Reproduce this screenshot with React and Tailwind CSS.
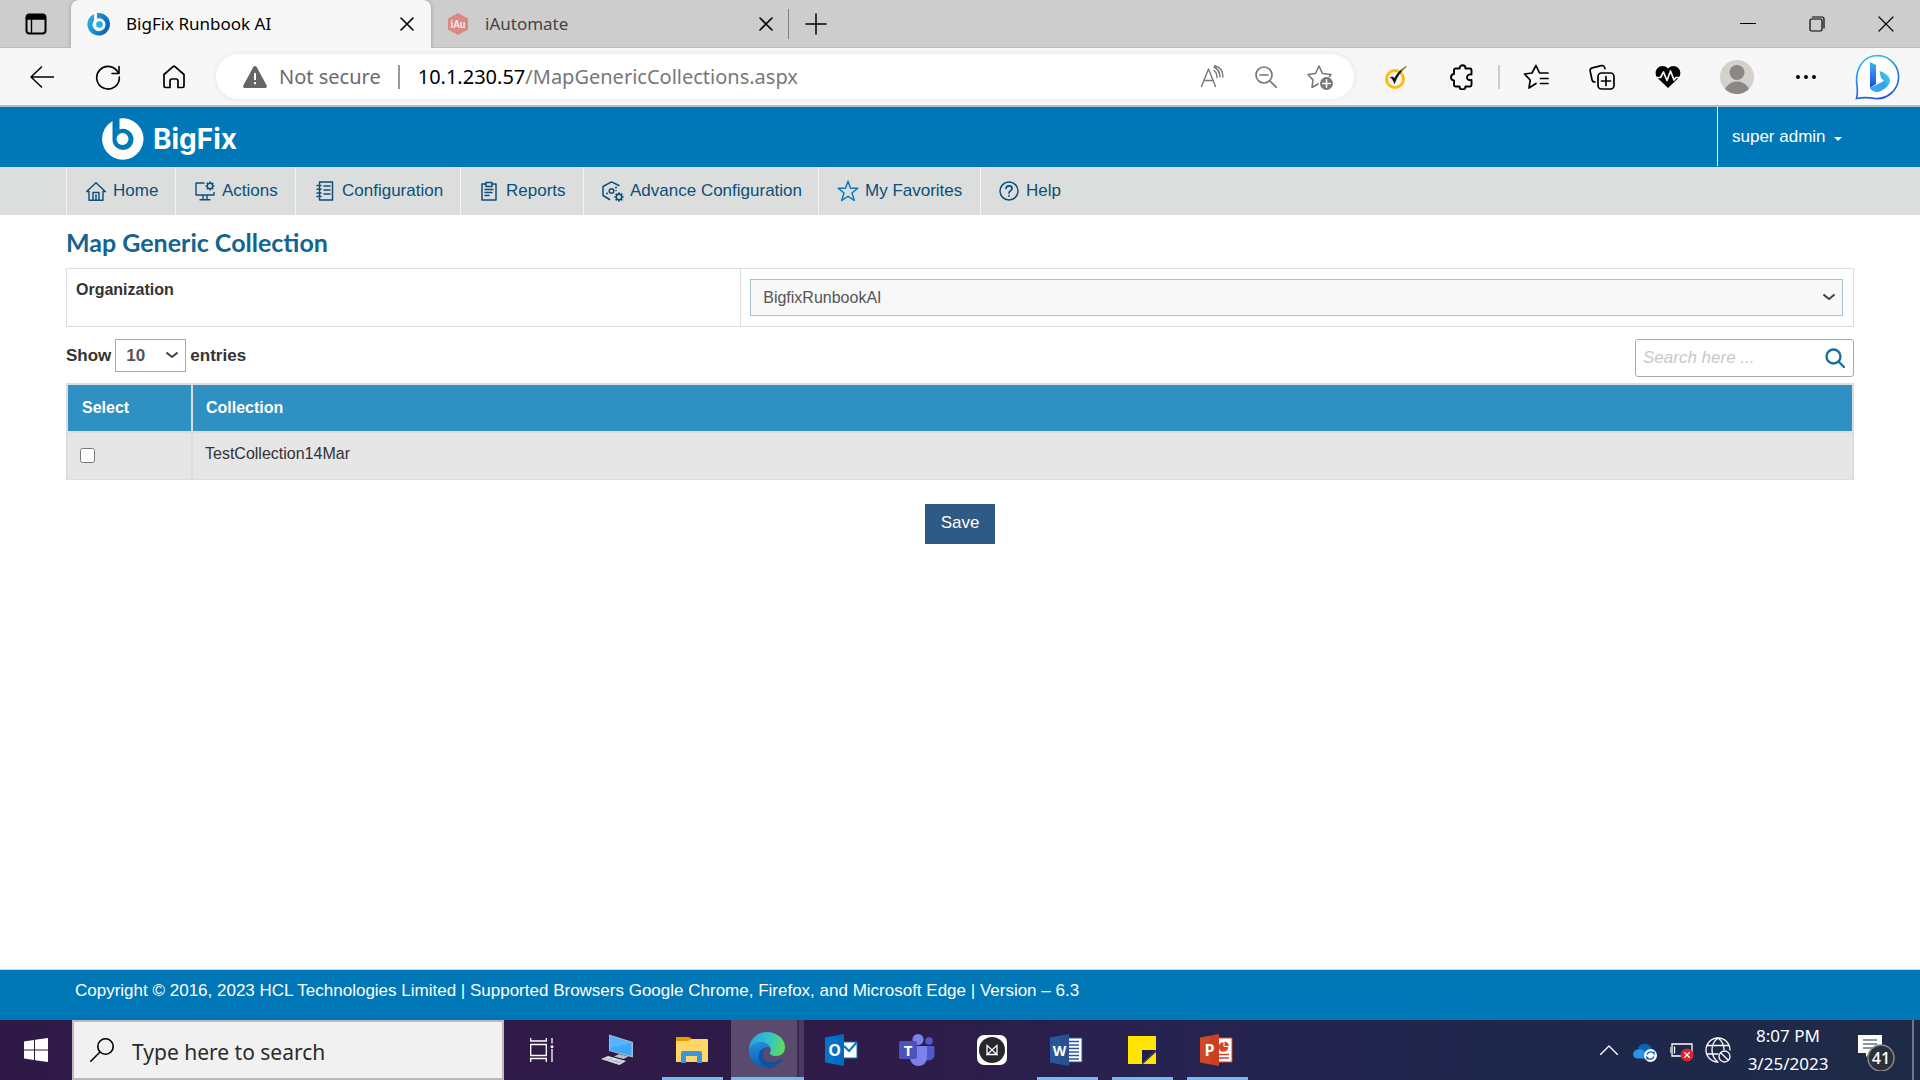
import React from "react";

const stroke = { fill: "none", stroke: "currentColor", strokeLinecap: "round", strokeLinejoin: "round" };

function Svg({ w = 24, h = 24, vb, sw = 1.5, children, className = "" }) {
  return (
    <svg width={w} height={h} viewBox={vb || `0 0 ${w} ${h}`} {...stroke} strokeWidth={sw} className={`shrink-0 ${className}`} aria-hidden="true">
      {children}
    </svg>
  );
}

const gearTeeth = (cx, cy, r1, r2) =>
  [0, 45, 90, 135, 180, 225, 270, 315]
    .map((a) => {
      const t = (a * Math.PI) / 180;
      return `M${cx + r1 * Math.cos(t)} ${cy + r1 * Math.sin(t)}L${cx + r2 * Math.cos(t)} ${cy + r2 * Math.sin(t)}`;
    })
    .join("");

const Close = () => (
  <Svg w={14} h={14} sw={1.6}>
    <path d="M1 1l12 12M13 1L1 13" />
  </Svg>
);

const Chevron = ({ className }) => (
  <Svg w={12} h={8} sw={2} className={`text-[#444] ${className}`}>
    <path d="M.5 1.500l5.500 4.500 5.500-4.500" strokeLinecap="butt" />
  </Svg>
);

/* ---------- Browser ---------- */

function TabStrip() {
  return (
    <div className="flex h-12 bg-[#cdcdcd] text-black">
      <button aria-label="Tab actions" className="flex w-[71px] shrink-0 items-center justify-center border-b border-[#bdbdbd]">
        <Svg w={22} h={22} sw={2}>
          <rect x="1.5" y="1.5" width="19" height="19" rx="3" />
          <path d="M1.5 3.5a2 2 0 0 1 2-2h15a2 2 0 0 1 2 2v2.700h-19z" fill="currentColor" strokeWidth="1" />
          <path d="M6.500 6v14" strokeWidth="1.400" />
        </Svg>
      </button>
      <div className="flex w-[360px] items-center rounded-t-lg bg-[#f7f7f7] pr-[17px] pl-4 shadow-[0_0_4px_rgba(0,0,0,0.25)] [clip-path:inset(0_-4px_0_-4px)]">
        <svg width="24" height="24" viewBox="0 0 24 24" className="shrink-0" aria-hidden="true">
          <defs>
            <linearGradient id="fav" x1="0" y1="0" x2="1" y2="0.4">
              <stop offset="0" stopColor="#2cb8ea" />
              <stop offset="1" stopColor="#0a68b4" />
            </linearGradient>
          </defs>
          <path fillRule="evenodd" fill="url(#fav)" d="M10 1h2a11.300 11.300 0 1 1-8.500 3.500L7 2v6.500a6.500 6.500 0 1 0 3-2z" />
          <circle cx="12.500" cy="12.500" r="3.300" fill="#22aee4" />
        </svg>
        <span className="ml-[15px] flex-1 font-['Noto_Sans'] text-[17px]">BigFix Runbook AI</span>
        <button aria-label="Close tab"><Close /></button>
      </div>
      <div className="flex w-[357px] items-center border-b border-[#bdbdbd] pr-[15px] pl-4">
        <svg width="22" height="24" viewBox="0 0 22 24" className="shrink-0" aria-hidden="true">
          <path d="M11 1l10 5.600v11L11 23 1 17.600v-11z" fill="#d98884" />
          <text x="11" y="16" textAnchor="middle" fontSize="10" fontWeight="700" fontFamily="Roboto, sans-serif" fill="#f7e6e5">iAu</text>
        </svg>
        <span className="ml-4 flex-1 font-['Noto_Sans'] text-[17px] text-[#444]">iAutomate</span>
        <button aria-label="Close tab"><Close /></button>
      </div>
      <div className="flex flex-1 items-center border-b border-[#bdbdbd]">
        <div className="h-[30px] w-px bg-[#808080]" />
        <button aria-label="New tab" className="ml-4">
          <Svg w={22} h={22}><path d="M11 1v20M1 11h20" /></Svg>
        </button>
        <div className="flex-1" />
        <button aria-label="Minimize" className="flex w-[69px] justify-center"><Svg w={16} h={16} sw={1}><path d="M0 7.500h16" /></Svg></button>
        <button aria-label="Restore" className="flex w-[69px] justify-center">
          <Svg w={16} h={16} sw={1.2}>
            <rect x="1" y="3" width="12" height="12" rx="1.500" />
            <path d="M3.500 1h9.500a2 2 0 0 1 2 2v9" />
          </Svg>
        </button>
        <button aria-label="Close" className="flex w-[69px] justify-center"><Svg w={16} h={16} sw={1.2}><path d="M1 1l14 14M15 1L1 15" /></Svg></button>
      </div>
    </div>
  );
}

function ToolButton({ label, children, className = "w-[66px]" }) {
  return (
    <button aria-label={label} className={`flex shrink-0 items-center justify-center ${className}`}>
      {children}
    </button>
  );
}

function Toolbar() {
  return (
    <div className="flex h-[59px] items-center border-b-2 border-[#bbb] bg-[#f7f7f7] pl-[9px] text-black">
      <ToolButton label="Back">
        <Svg w={24} h={24}><path d="M24 12H1M11.500 2L1 12l10.500 10" /></Svg>
      </ToolButton>
      <ToolButton label="Refresh">
        <Svg w={26} h={26} sw={1.6}><path d="M23.500 9.500A11.300 11.300 0 1 0 24.300 13M24 2.500v7h-7" /></Svg>
      </ToolButton>
      <ToolButton label="Home">
        <Svg w={24} h={24} sw={1.7}><path d="M2 9.500L11 1.700a1.500 1.500 0 0 1 2 0l9 7.800V21a1.500 1.500 0 0 1-1.500 1.500H16V16a2 2 0 0 0-2-2h-4a2 2 0 0 0-2 2v6.500H3.500A1.500 1.500 0 0 1 2 21z" /></Svg>
      </ToolButton>
      <div className="mr-[9px] ml-[9px] flex h-[45px] flex-1 items-center rounded-full bg-white pl-[27px] shadow-[0_0_6px_rgba(0,0,0,0.08)]">
        <svg width="24" height="22" viewBox="0 0 24 22" className="shrink-0" aria-hidden="true">
          <path d="M10.300 1a2 2 0 0 1 3.400 0L23.700 19.500A1.700 1.700 0 0 1 22 22H2a1.700 1.700 0 0 1-1.700-2.500z" fill="#666" />
          <path d="M12 7v7M12 16v2.200" stroke="#fff" strokeWidth="2" />
        </svg>
        <span className="ml-3 font-['Noto_Sans'] text-[20px] text-[#6b6b6b]">Not secure</span>
        <div className="mr-[18px] ml-[17px] h-6 w-0.5 bg-[#999]" />
        <div role="textbox" aria-label="Address" className="flex-1 font-['Noto_Sans'] text-[20px] text-black">
          10.1.230.57<span className="text-[#777]">/MapGenericCollections.aspx</span>
        </div>
        <button aria-label="Read aloud" className="flex w-[54px] justify-center text-[#777]">
          <Svg w={24} h={24}><path d="M1.500 21.500L8.500 4l7 17.500M4 15.500h9M14 5.500c2 1.500 3 4 3 7M14 2c4 2 6 6 6 10M14.500 0.800C20 2 23 6.500 23 12" strokeWidth="1.400" /></Svg>
        </button>
        <button aria-label="Zoom out" className="flex w-[54px] justify-center text-[#777]">
          <Svg w={22} h={22} sw={1.7}><circle cx="9" cy="9" r="8" /><path d="M5 9h8M15 15l6.500 6.500" /></Svg>
        </button>
        <button aria-label="Add to favorites" className="flex w-[54px] justify-center text-[#777]">
          <Svg w={26} h={26} sw={1.6}>
            <path d="M11 20l-6 3.500 1-7.500-5-5.500 7.500-1L12 2l3.500 7.500 8.500 1-1.500 2" />
            <circle cx="19.500" cy="19.500" r="6.500" fill="currentColor" stroke="none" />
            <path d="M19.500 15.700v7.600M15.700 19.500h7.600" stroke="#fff" />
          </Svg>
        </button>
        <div className="w-[7px]" />
      </div>
      <ToolButton label="Norton Safe Web">
        <Svg w={24} h={24}>
          <circle cx="11" cy="14" r="8.500" stroke="#fdbb11" strokeWidth="3" />
          <path d="M6.500 12.500c1 .5 3 3 4 6 2-6 6-12 11-16.500-6 3.500-9 7.500-11 11.500-1-1.500-2-2-4-1z" fill="#111" stroke="#111" strokeWidth=".6" />
          <path d="M18 5.500L22 1.500" stroke="#a79357" strokeWidth="1.400" />
        </Svg>
      </ToolButton>
      <ToolButton label="Extensions">
        <Svg w={24} h={26} sw={1.9}>
          <path d="M5.500 4.500h4c0-4.300 6-4.300 6 0H20a1.500 1.500 0 0 1 1.500 1.500v4.500c-5.500-1-6.500 6.500 0 5.500v5a1.500 1.500 0 0 1-1.500 1.500h-4.500c0 4-6 4-6 0H5.500A1.500 1.500 0 0 1 4 21v-4.500c-4-.3-4-6.200 0-6.500V6a1.500 1.500 0 0 1 1.500-1.500z" />
        </Svg>
      </ToolButton>
      <div className="mx-[3px] h-6 w-0.5 bg-[#ccc]" />
      <ToolButton label="Favorites">
        <Svg w={26} h={26} sw={1.7}>
          <path d="M13 19.500L6 24l1.200-8L1.500 10l7.500-1 4-7.500L16.500 9H25M17.500 14.500H25M17.500 19.500H25" />
        </Svg>
      </ToolButton>
      <ToolButton label="Collections">
        <Svg w={26} h={26} sw={1.7}>
          <rect x="9" y="9" width="16" height="16" rx="3.500" />
          <path d="M17 12.500v9M12.500 17h9M6 18c-2 0-2.700-.8-3-2.200L1.200 7.300C.9 5.500 1.500 4.300 3.300 3.900l9-2.300c2-.5 3 .3 3.700 3" />
        </Svg>
      </ToolButton>
      <ToolButton label="Browser essentials">
        <Svg w={26} h={24}>
          <path d="M13 23L2 12.500C-3 4 7-3 13 3.500 19-3 29 4 24 12.500z" fill="currentColor" stroke="none" />
          <path d="M0 12.500h5.500L8.500 7l3.500 8.500L15.500 6l3.500 9 2-2.500H26" stroke="#f7f7f7" strokeWidth="1.700" />
        </Svg>
      </ToolButton>
      <ToolButton label="Profile" className="w-[72px]">
        <svg width="34" height="34" viewBox="0 0 34 34" aria-hidden="true">
          <circle cx="17" cy="17" r="17" fill="#d4d1cd" />
          <circle cx="17" cy="12.500" r="7.500" fill="#8b8784" />
          <path d="M5 29c5-10 19-10 24 0a17 17 0 0 1-24 0z" fill="#8b8784" />
        </svg>
      </ToolButton>
      <ToolButton label="Settings and more">
        <svg width="20" height="4" viewBox="0 0 20 4" aria-hidden="true"><circle cx="2" cy="2" r="2" /><circle cx="10" cy="2" r="2" /><circle cx="18" cy="2" r="2" /></svg>
      </ToolButton>
      <ToolButton label="Bing chat" className="mr-[3px] w-[78px]">
        <svg width="46" height="46" viewBox="0 0 46 46" aria-hidden="true">
          <defs>
            <linearGradient id="ring" x1="0.200" y1="0" x2="0.500" y2="1"><stop offset="0" stopColor="#2fc0ee" /><stop offset="1" stopColor="#2457e0" /></linearGradient>
            <linearGradient id="stem" x1="0" y1="0" x2="0" y2="1"><stop offset="0" stopColor="#3cb4f5" /><stop offset="1" stopColor="#1b48dd" /></linearGradient>
            <linearGradient id="bowl" x1="1" y1="0" x2="0" y2="1"><stop offset="0" stopColor="#3ae0e8" /><stop offset="1" stopColor="#2f86ee" /></linearGradient>
          </defs>
          <path d="M1.500 44.500C3 39 2.500 35 1.800 30 .5 17 6 1.500 23.500 1.500a21.500 21.500 0 1 1-3 43c-6-1-12-1.500-19 0z" fill="#fff" stroke="url(#ring)" strokeWidth="1.700" />
          <path d="M15 8l6 3v19l-6 4z" fill="url(#stem)" />
          <path d="M15 34l12-6 8-1c-1 4-4 7-9 10-4 2-9 1-11-3z" fill="#38a5f2" />
          <path d="M24.500 17c6 2 10.500 5 10.500 10-1 4-3 6-7 8l-1-7 2-1.500-3-2.500z" fill="url(#bowl)" />
        </svg>
      </ToolButton>
    </div>
  );
}

/* ---------- Application ---------- */

function Header() {
  return (
    <header className="flex h-[60px] items-center bg-[#0077b6] text-white">
      <a href="#home" className="ml-[101px] flex flex-1 items-center gap-2 pt-1">
        <svg width="44" height="44" viewBox="0 0 44 44" aria-hidden="true">
          <path fill="#fff" d="M18.500 1.500A20.700 20.700 0 1 1 6.500 8L11.500 4v18.500a10.500 10.500 0 1 0 7-10z" />
          <circle cx="21.500" cy="22" r="6" fill="#fff" />
        </svg>
        <span className="font-['Inter'] text-[28px] leading-8 font-bold">BigFix</span>
      </a>
      <div className="h-[59px] w-px self-start bg-white" />
      <button className="flex w-[202px] items-center gap-2 pb-px pl-[14px] text-[17px] leading-6">
        super admin
        <svg width="8" height="4" viewBox="0 0 8 4" fill="currentColor" className="mt-1" aria-hidden="true"><path d="M0 0h8L4 4z" /></svg>
      </button>
    </header>
  );
}

const HomeIcon = () => (
  <Svg w={20} h={19} sw={1.4}>
    <path d="M.7 9.500L10 .8l9.300 8.700H17v8.700H3V9.500zM7 18v-7.500h6V18M10 18v-5" />
  </Svg>
);
const ActionsIcon = () => (
  <Svg w={20} h={20} sw={1.4}>
    <path d="M9 2H1v12h18v-2.500M8 14v4M12 14v4M5 18.800h10" />
    <circle cx="15" cy="5" r="2.700" />
    <path d={gearTeeth(15, 5, 3, 4.4)} strokeWidth="1.700" strokeLinecap="butt" />
  </Svg>
);
const ConfigIcon = () => (
  <Svg w={18} h={20} sw={1.5}>
    <path d="M3.500 3V1h13v18h-13v-2M8 5h6M8 9h6M8 13h6M1 4.500h4M1 8.200h4M1 11.900h4M1 15.600h4M3.500 4.500v11" />
  </Svg>
);
const ReportsIcon = () => (
  <Svg w={16} h={20} sw={1.5}>
    <path d="M4 3H1v16h14V3h-3M5 1.500h6v4H5zM4 8.500h8M4 11.500h7M4 14.500h4" />
  </Svg>
);
const AdvanceIcon = () => (
  <Svg w={22} h={21} sw={1.5}>
    <path d="M17 4.500L9.500.8 1 5.500v9L7.500 18.500" />
    <circle cx="9.500" cy="10" r="2.300" />
    <circle cx="14" cy="6.500" r="1" fill="currentColor" stroke="none" />
    <circle cx="5" cy="12.500" r="1" fill="currentColor" stroke="none" />
    <circle cx="14" cy="9.500" r=".8" fill="currentColor" stroke="none" />
    <circle cx="17" cy="16" r="2.700" />
    <path d={gearTeeth(17, 16, 3, 4.7)} strokeWidth="1.600" strokeLinecap="butt" />
  </Svg>
);
const StarIcon = () => (
  <Svg w={22} h={22} sw={1.5} className="text-[#0f7ab8]">
    <path d="M11 1.200l2.500 7h7.300L15 13l2.300 7.500L11 16.300l-6.300 4.200L7 13 1.200 8.200h7.300z" />
  </Svg>
);
const HelpIcon = () => (
  <Svg w={20} h={20} sw={1.5}>
    <circle cx="10" cy="10" r="9" />
    <path d="M7 7.500c.3-3.500 6-3.500 6 0 0 2-3 2.200-3 4.500M10 14.600v.4" strokeWidth="1.700" />
  </Svg>
);

const navItems = [
  { label: "Home", icon: HomeIcon, box: "w-[109px] pl-[19px] gap-[7px]" },
  { label: "Actions", icon: ActionsIcon, box: "w-[120px] pl-[19px] gap-[7px]" },
  { label: "Configuration", icon: ConfigIcon, box: "w-[165px] pl-[20px] gap-[8px]" },
  { label: "Reports", icon: ReportsIcon, box: "w-[123px] pl-[20px] gap-[9px]" },
  { label: "Advance Configuration", icon: AdvanceIcon, box: "w-[235px] pl-[18px] gap-[6px]" },
  { label: "My Favorites", icon: StarIcon, box: "w-[162px] pl-[18px] gap-[6px]" },
  { label: "Help", icon: HelpIcon, box: "w-[100px] pl-[18px] gap-[7px]" },
];

function Nav() {
  return (
    <nav className="flex h-12 bg-[#dcdedd] pl-[66px] text-[17px] leading-6 text-[#0b4f79]">
      {navItems.map(({ label, icon: Icon, box }) => (
        <a key={label} href="#nav" className={`flex items-center border-l border-[#f5f5f5] whitespace-nowrap ${box}`}>
          <Icon />
          {label}
        </a>
      ))}
    </nav>
  );
}

function MainContent() {
  return (
    <main className="flex flex-1 flex-col px-[66px] text-[16px] leading-6 text-[#333]">
      <h1 className="pt-[11px] font-['Lato'] text-[25px] leading-8 font-bold text-[#15648f]">Map Generic Collection</h1>
      <div className="mt-[10px] flex border border-[#ddd]">
        <label htmlFor="organization" className="w-[37.75%] border-r border-[#ddd] pt-[9px] pl-[9px] font-bold">
          Organization
        </label>
        <div className="relative flex-1 py-[10px] pr-[10px] pl-[9px]">
          <select id="organization" className="h-[37px] w-full appearance-none border border-[#a3c3d1] bg-[#f8f8f8] pl-3 text-[#555]">
            <option>BigfixRunbookAI</option>
          </select>
          <Chevron className="pointer-events-none absolute top-6 right-[18px]" />
        </div>
      </div>
      <div className="mt-3 flex items-start justify-between">
        <div className="flex h-[33px] items-center gap-1 text-[17px] font-bold">
          <label htmlFor="count">Show</label>
          <div className="relative">
            <select id="count" className="block h-[33px] w-[71px] appearance-none border border-[#aaa] bg-white pl-[10px] font-bold text-[#555]">
              <option>10</option>
            </select>
            <Chevron className="pointer-events-none absolute top-3 right-2" />
          </div>
          <span>entries</span>
        </div>
        <div className="flex h-[38px] w-[219px] items-center rounded-[3px] border border-[#aaa] bg-white pr-2 pl-[7px]">
          <input aria-label="Search" placeholder="Search here ..." className="w-0 flex-1 text-[17px] italic outline-none placeholder:text-[#c8c8c8]" />
          <button aria-label="Search" className="text-[#1b7099]">
            <Svg w={20} h={20} sw={2.4}><circle cx="8.500" cy="8.500" r="7" /><path d="M13.500 13.500l5.500 5.500" /></Svg>
          </button>
        </div>
      </div>
      <table className="mt-[6px] w-full border-collapse text-left">
        <thead>
          <tr className="h-12 bg-[#2f90c3] text-white">
            <th className="w-[125px] border-2 border-[#ddd] px-[14px] pb-px font-bold">Select</th>
            <th className="border-2 border-[#ddd] px-[13px] pb-px font-bold">Collection</th>
          </tr>
        </thead>
        <tbody>
          <tr className="h-[47px] bg-[#e6e6e6]">
            <td className="border-2 border-b-1 border-[#ddd] px-3">
              <input type="checkbox" aria-label="Select TestCollection14Mar" className="block size-[15px]" />
            </td>
            <td className="border-2 border-b-1 border-[#ddd] px-3 pb-[3px]">TestCollection14Mar</td>
          </tr>
        </tbody>
      </table>
      <button className="mt-6 h-10 w-[70px] self-center bg-[#305a86] pb-px text-[17px] text-white">Save</button>
    </main>
  );
}

/* ---------- Taskbar ---------- */

const ComputerIcon = () => (
  <svg width="32" height="32" viewBox="0 0 32 32" aria-hidden="true">
    <path d="M8 .5L32 8v15.500l-2-.5L8 17z" fill="#a9bcc6" />
    <path d="M9 2l21.500 6.800v13L9 16.500z" fill="#3ea9fb" />
    <path d="M9 2l21.500 6.800L9 14z" fill="#6cc0ff" opacity=".5" />
    <path d="M13 22.500l5-2.500 9.500 2.500-5 2.500z" fill="#b5bec5" />
    <path d="M0 25l7-3 18 5-6.500 4z" fill="#e1e4e7" />
    <path d="M3 24l17.500 5M5.500 26.500l7-3M11 28.500l6.500-3M15 29.500l6.500-3" stroke="#9aa5ad" strokeWidth=".7" />
  </svg>
);
const FolderIcon = () => (
  <svg width="32" height="28" viewBox="0 0 32 28" aria-hidden="true">
    <path d="M0 1h13l3 2v3H0z" fill="#e0a100" />
    <path d="M0 5h12l4-2h15a1 1 0 0 1 1 1v21a1 1 0 0 1-1 1H0z" fill="#ffd768" />
    <path d="M5 27V17a2 2 0 0 1 2-2h17a2 2 0 0 1 2 2v10h-5v-7H10v7z" fill="#3796dd" />
  </svg>
);
const EdgeIcon = () => (
  <svg width="36" height="36" viewBox="0 0 36 36" aria-hidden="true">
    <defs>
      <linearGradient id="e1" x1="0" y1="0.300" x2="1" y2="0.500"><stop offset="0" stopColor="#2a9fe0" /><stop offset=".5" stopColor="#32c1cf" /><stop offset="1" stopColor="#5fdb5c" /></linearGradient>
      <linearGradient id="e2" x1="0" y1="0" x2="0.300" y2="1"><stop offset="0" stopColor="#2493df" /><stop offset="1" stopColor="#0b5cb5" /></linearGradient>
    </defs>
    <path d="M0 18C0 7 8 0 18 0s18 7 18 15c0 6-4 9-9 9-4 0-7-1.500-6-3.500 2-3 0-7-5-7C8 13 2 16 0 18z" fill="url(#e1)" />
    <path d="M0 19c1-6 6-9 12-9 5 0 9 3 10 7-3-4-8-2-8 5 0 6 5 13 13 13-3 1.300-6 1.500-9 1C8 36 0 28 0 19z" fill="url(#e2)" />
    <path d="M14 22c-1 6 5 9 11 8 4-1 7-3 9-4-2 5-7 9-13 10-7-1-12-7-11-13 0-4 3-7 7-7-2 1-3 3-3 6z" fill="#164f9e" />
  </svg>
);
const OfficeBase = ({ color, dark, letter, children }) => (
  <svg width="33" height="32" viewBox="0 0 33 32" aria-hidden="true">
    {children}
    <path d="M0 3.500L19 0v32L0 28.500z" fill={color} />
    <path d="M10 1.700L19 0v32l-9-1.700z" fill={dark} opacity=".2" />
    <text x="9.500" y="21.500" textAnchor="middle" fontSize={letter === "W" ? 14 : 16} fontWeight="700" fontFamily="Open Sans, sans-serif" fill="#fff">{letter}</text>
  </svg>
);
const OutlookIcon = () => (
  <OfficeBase color="#0273c8" dark="#0050a0" letter="O">
    <path d="M17 8h15v16H17z" fill="#fff" stroke="#0273c8" />
    <path d="M19 12l5 5 8-9" fill="none" stroke="#0273c8" strokeWidth="2" />
  </OfficeBase>
);
const WordIcon = () => (
  <OfficeBase color="#2b579a" dark="#1b3d78" letter="W">
    <path d="M17 4h15v24H17z" fill="#fff" stroke="#2b579a" />
    <path d="M19 7.500h10M19 11h10M19 14.500h10M19 18h10M19 21.500h10M19 25h10" stroke="#2b579a" strokeWidth="1.500" />
  </OfficeBase>
);
const PowerpointIcon = () => (
  <OfficeBase color="#d24726" dark="#a52f14" letter="P">
    <path d="M17 4h15v24H17z" fill="#fff" stroke="#d24726" />
    <circle cx="23.500" cy="13" r="4.800" fill="#d24726" />
    <path d="M24 12.500V7c3 0 5.500 2.500 5.500 5.500z" fill="#d24726" stroke="#fff" />
    <path d="M19 20.500h10M19 24h10" stroke="#d24726" strokeWidth="1.700" />
  </OfficeBase>
);
const TeamsIcon = () => (
  <svg width="36" height="32" viewBox="0 0 36 32" aria-hidden="true">
    <circle cx="19" cy="5.500" r="5.500" fill="#7b83eb" />
    <circle cx="30" cy="7" r="3.800" fill="#5059c9" />
    <path d="M25 12h9a1.500 1.500 0 0 1 1.500 1.500V21a6 6 0 0 1-10 4z" fill="#5059c9" />
    <path d="M11 12h17v11c0 12-17 12-17 0z" fill="#7b83eb" />
    <rect x="0" y="7" width="18" height="18" rx="1.800" fill="#4b53bc" />
    <text x="9" y="21.500" textAnchor="middle" fontSize="15" fontWeight="700" fontFamily="Open Sans, sans-serif" fill="#fff">T</text>
  </svg>
);
const MeetIcon = () => (
  <svg width="30" height="30" viewBox="0 0 30 30" aria-hidden="true">
    <rect width="30" height="30" rx="7" fill="#fff" />
    <circle cx="15" cy="15" r="13" fill="#26262b" />
    <path d="M10 19.500v-9l5 4.500 5-4.500v9L15 15zM10 19.500h10" fill="none" stroke="#fff" strokeWidth="1.300" />
  </svg>
);
const StickyIcon = () => (
  <svg width="28" height="28" viewBox="0 0 28 28" aria-hidden="true">
    <path d="M0 0h28v14L14 28H0z" fill="#ffe500" />
    <path d="M14 14h14L14 28z" fill="#22204c" />
    <path d="M28 16v12H15z" fill="#ffe500" />
  </svg>
);
const TaskViewIcon = () => (
  <svg width="24" height="24" viewBox="0 0 24 24" fill="none" stroke="#fff" strokeWidth="1.300" aria-hidden="true">
    <path d="M.7 0v3h15.600V0M.7 24v-3.500h15.600V24M.7 6.500h15.600v11H.7zM22 0v5.500M22 11v13" />
    <path d="M20.700 7.500h2.600v2.600h-2.600z" fill="#fff" stroke="none" />
  </svg>
);

const apps = [
  { name: "Task View", icon: TaskViewIcon },
  { name: "Remote Desktop", icon: ComputerIcon },
  { name: "File Explorer", icon: FolderIcon, open: true },
  { name: "Microsoft Edge", icon: EdgeIcon, active: true },
  { name: "Outlook", icon: OutlookIcon },
  { name: "Teams", icon: TeamsIcon },
  { name: "Meetings", icon: MeetIcon },
  { name: "Word", icon: WordIcon, open: true },
  { name: "Sticky Notes", icon: StickyIcon, open: true },
  { name: "PowerPoint", icon: PowerpointIcon, open: true },
];

function Taskbar() {
  return (
    <div className="flex h-[60px] bg-[linear-gradient(90deg,#2f1a47_0%,#2f1b48_45%,#262350_62%,#1d264b_80%,#1e2b46_100%)] font-['Noto_Sans'] text-white">
      <button aria-label="Start" className="flex w-[72px] shrink-0 items-center justify-center">
        <svg width="24" height="24" viewBox="0 0 24 24" fill="#fff" aria-hidden="true">
          <path d="M0 3.400L10 2v9.500H0zM11 1.800L24 0v11.500H11zM0 12.500h10V22L0 20.600zM11 12.500h13V24l-13-1.800z" />
        </svg>
      </button>
      <div className="flex w-[432px] items-center border-2 border-[#bbb] bg-[#f1f1f1] pl-4 text-black">
        <Svg w={24} h={24} sw={1.6}><circle cx="15.500" cy="8.500" r="7.700" /><path d="M10 14L.8 23.200" /></Svg>
        <input aria-label="Search Windows" placeholder="Type here to search" className="ml-[18px] h-full w-0 flex-1 pt-1 text-[21px] outline-none placeholder:text-[#2b2b2b]" />
      </div>
      {apps.map(({ name, icon: Icon, open, active }) => (
        <button key={name} aria-label={name} className="relative flex w-[75px] shrink-0 items-center justify-center">
          {active && (
            <span className="absolute inset-y-0 right-0 left-[2px] flex border-b-[3px] border-[#76b9ed]">
              <span className="w-[66px] bg-[#5a4a6e]" />
              <span className="flex-1 border-l-2 border-[#3a2a50] bg-[#4a3a60]" />
            </span>
          )}
          <span className="relative"><Icon /></span>
          {open && <span className="absolute right-[6px] bottom-0 left-[8px] h-[3px] bg-[#76b9ed]" />}
        </button>
      ))}
      <div className="flex flex-1 items-center justify-end">
        <button aria-label="Show hidden icons" className="mr-[15px]">
          <Svg w={18} h={10} sw={1.4}><path d="M.5 9.500L9 1l8.500 8.500" /></Svg>
        </button>
        <svg width="24" height="20" viewBox="0 0 24 20" className="mt-1 mr-[13px]" aria-hidden="true">
          <path d="M5 6a7.500 7.500 0 0 1 14 1c4 0 5 4 4 6L12 16z" fill="#0a63b8" />
          <path d="M4 16.500C-1.500 16-1 8 4.500 7.500c3-1.500 6 0 8 3l5 6z" fill="#2794e6" />
          <circle cx="17.500" cy="13.500" r="6.500" fill="#fff" />
          <path d="M14 12.500a4 4 0 0 1 7-1v-2M21 14.500a4 4 0 0 1-7 1v2" fill="none" stroke="#0a63b8" strokeWidth="1.400" />
        </svg>
        <svg width="24" height="20" viewBox="0 0 24 20" className="mt-1 mr-[11px]" fill="none" stroke="#fff" strokeWidth="1.300" aria-hidden="true">
          <path d="M2 2h20v12H2zM0 5v6M4.500 4.500v7" />
          <circle cx="17" cy="13" r="6.500" fill="#e0202c" stroke="none" />
          <path d="M14.200 10.200l5.600 5.600M19.800 10.200l-5.600 5.600" />
        </svg>
        <Svg w={26} h={26} sw={1.3} className="mr-4">
          <path d="M13 25A12 12 0 1 1 25 13M13 1c-8 6-8 18 0 24M13 1c4 3 6 7 6 11.500M2.500 8.500h21M1.500 17H13" />
          <circle cx="19.500" cy="19.500" r="5.500" />
          <path d="M15.700 15.700l7.600 7.600" />
        </Svg>
        <div className="w-[82px] text-center text-[17px] leading-7 whitespace-nowrap">
          <div>8:07 PM</div>
          <div>3/25/2023</div>
        </div>
        <button aria-label="Notifications" className="mr-[17px] ml-[29px]">
          <svg width="37" height="37" viewBox="0 0 37 37" className="mt-1" aria-hidden="true">
            <path d="M0 1h24v18H12l-4 4v-4H0z" fill="#fff" />
            <path d="M5 6h14M5 10h14M5 14h14" stroke="#1e2a47" strokeWidth="1.200" />
            <circle cx="23" cy="24" r="13" fill="#2d3038" stroke="#888" strokeWidth="1.500" />
            <text x="23" y="29.500" textAnchor="middle" fontSize="16" fontWeight="600" fontFamily="Open Sans, sans-serif" fill="#fff">41</text>
          </svg>
        </button>
        <div className="mr-[6px] h-full w-0.5 bg-[#6f7687]" />
      </div>
    </div>
  );
}

export default function App() {
  return (
    <div className="flex min-h-screen flex-col bg-white font-['Liberation_Sans',sans-serif]">
      <TabStrip />
      <Toolbar />
      <Header />
      <Nav />
      <MainContent />
      <footer className="h-[51px] border-t border-[#c5d5df] bg-[#0077b6] pt-[9px] pl-[75px] text-[17px] leading-6 text-white">
        Copyright © 2016, 2023 HCL Technologies Limited | Supported Browsers Google Chrome, Firefox, and Microsoft Edge | Version – 6.3
      </footer>
      <Taskbar />
    </div>
  );
}
